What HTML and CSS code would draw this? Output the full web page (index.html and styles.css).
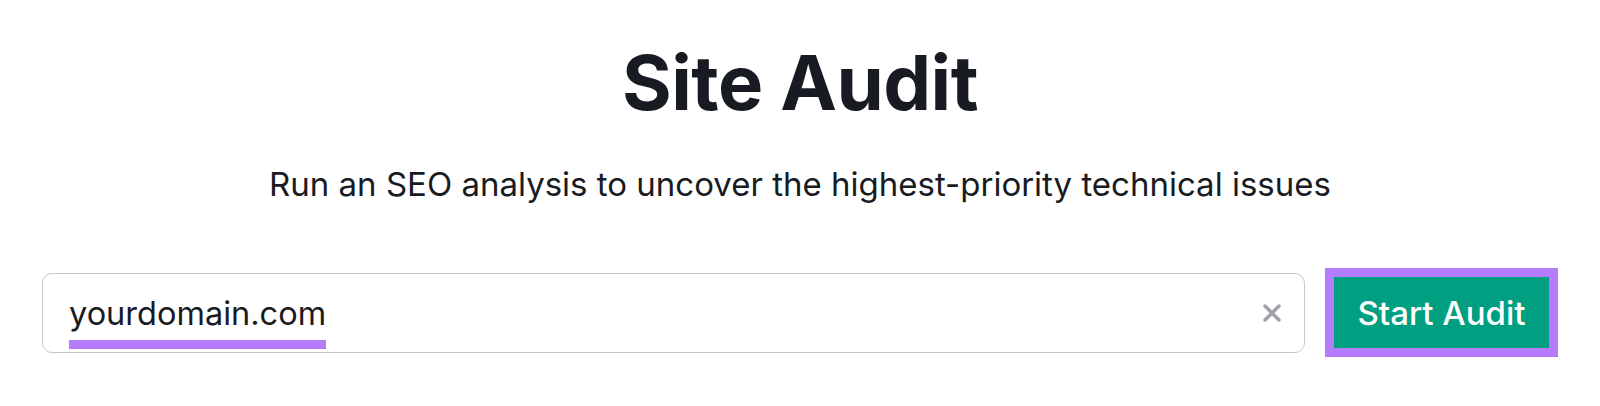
FILE: index.html
```html
<!DOCTYPE html>
<html lang="en">
<head>
    <meta charset="UTF-8">
    <meta name="viewport" content="width=device-width, initial-scale=1.0">
    <title>Site Audit</title>
    <link rel="stylesheet" href="styles.css">
</head>
<body>
    <h1 class="page-title">Site Audit</h1>
    <p class="page-subtitle">Run an SEO analysis to uncover the highest-priority technical issues</p>

    <div class="audit-form">
        <div class="domain-input">
            <span class="domain-text">yourdomain.com</span>
            <button class="clear-btn" aria-label="Clear">
                <svg width="22" height="22" viewBox="0 0 22 22">
                    <path d="M4 4 L18 18 M18 4 L4 18" stroke="#a0a1ab" stroke-width="3.4" stroke-linecap="round" fill="none"/>
                </svg>
            </button>
        </div>
        <div class="start-wrap">
            <button class="start-btn">Start Audit</button>
        </div>
    </div>
</body>
</html>
```

FILE: styles.css
```css
* {
    margin: 0;
    padding: 0;
    box-sizing: border-box;
}

body {
    background: #fff;
    color: #191b23;
    font-family: Inter, "Noto Sans", sans-serif;
    padding: 36px 42px 0;
}

.page-title {
    font-size: 76px;
    font-weight: 700;
    line-height: 92px;
    text-align: center;
    letter-spacing: -0.5px;
}

.page-subtitle {
    margin-top: 36px;
    font-size: 33px;
    line-height: 40px;
    text-align: center;
    color: #191b23;
}

.audit-form {
    display: flex;
    align-items: center;
    gap: 20px;
    margin-top: 64px;
}

.domain-input {
    flex: 1;
    height: 80px;
    display: flex;
    align-items: center;
    justify-content: space-between;
    border: 1.5px solid #c4c7cf;
    border-radius: 10px;
    padding: 0 21px 0 26px;
}

.domain-text {
    align-self: flex-end;
    margin-bottom: 3px;
    font-size: 32.5px;
    line-height: 36px;
    padding-bottom: 8px;
    border-bottom: 9px solid #b57cfb;
}

.clear-btn {
    background: none;
    border: none;
    display: flex;
}

.start-wrap {
    padding: 9px;
    background: #b57cfb;
}

.start-btn {
    display: block;
    width: 215px;
    height: 71px;
    background: #009f81;
    color: #fff;
    border: none;
    font-family: Inter, "Noto Sans", sans-serif;
    font-size: 33px;
    font-weight: 500;
}
```
